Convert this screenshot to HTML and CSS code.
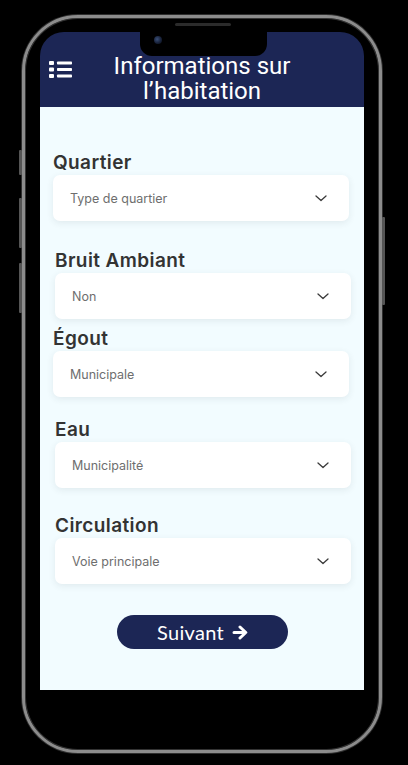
FILE: index.html
```html
<!DOCTYPE html>
<html lang="fr">
<head>
<meta charset="utf-8">
<title>Informations sur l'habitation</title>
<link rel="stylesheet" href="styles.css">
</head>
<body>
<div class="phone">
  <span class="speaker"></span>
  <span class="side-btn side-btn--mute"></span>
  <span class="side-btn side-btn--vol-up"></span>
  <span class="side-btn side-btn--vol-down"></span>
  <span class="side-btn side-btn--power"></span>
  <div class="screen">
    <div class="notch"><span class="camera"></span></div>
    <header class="header">
      <svg class="menu-icon" width="23" height="17" viewBox="0 0 23 17" aria-hidden="true">
        <rect x="0" y="0" width="5" height="4" rx="1" fill="#fff"/>
        <rect x="0" y="6.5" width="5" height="4" rx="1" fill="#fff"/>
        <rect x="0" y="13" width="5" height="4" rx="1" fill="#fff"/>
        <rect x="8" y="0.5" width="15" height="3" rx="0.8" fill="#fff"/>
        <rect x="8" y="7" width="15" height="3" rx="0.8" fill="#fff"/>
        <rect x="8" y="13.5" width="15" height="3" rx="0.8" fill="#fff"/>
      </svg>
      <h1 class="title"><span class="title-line">Informations sur</span><span class="title-line">l’habitation</span></h1>
      <span class="header-spacer"></span>
    </header>
    <main class="content">
      <div class="field field--quartier">
        <label class="field-label">Quartier</label>
        <div class="select"><span class="select-value">Type de quartier</span><svg class="chevron" width="12" height="7" viewBox="0 0 12 7"><path d="M1 1l5 4.5L11 1" fill="none" stroke="#3a3a3a" stroke-width="1.3" stroke-linecap="round" stroke-linejoin="round"/></svg></div>
      </div>
      <div class="field field--bruit field--shift">
        <label class="field-label">Bruit Ambiant</label>
        <div class="select"><span class="select-value">Non</span><svg class="chevron" width="12" height="7" viewBox="0 0 12 7"><path d="M1 1l5 4.5L11 1" fill="none" stroke="#3a3a3a" stroke-width="1.3" stroke-linecap="round" stroke-linejoin="round"/></svg></div>
      </div>
      <div class="field field--egout">
        <label class="field-label">Égout</label>
        <div class="select"><span class="select-value">Municipale</span><svg class="chevron" width="12" height="7" viewBox="0 0 12 7"><path d="M1 1l5 4.5L11 1" fill="none" stroke="#3a3a3a" stroke-width="1.3" stroke-linecap="round" stroke-linejoin="round"/></svg></div>
      </div>
      <div class="field field--eau field--shift">
        <label class="field-label">Eau</label>
        <div class="select"><span class="select-value">Municipalité</span><svg class="chevron" width="12" height="7" viewBox="0 0 12 7"><path d="M1 1l5 4.5L11 1" fill="none" stroke="#3a3a3a" stroke-width="1.3" stroke-linecap="round" stroke-linejoin="round"/></svg></div>
      </div>
      <div class="field field--circulation field--shift">
        <label class="field-label">Circulation</label>
        <div class="select"><span class="select-value">Voie principale</span><svg class="chevron" width="12" height="7" viewBox="0 0 12 7"><path d="M1 1l5 4.5L11 1" fill="none" stroke="#3a3a3a" stroke-width="1.3" stroke-linecap="round" stroke-linejoin="round"/></svg></div>
      </div>
      <button class="next-btn" type="button">Suivant
        <svg class="next-arrow" width="16" height="15" viewBox="0 0 16 15" aria-hidden="true"><path d="M2 7.5h11.5M8 2l5.8 5.5L8 13" fill="none" stroke="#fff" stroke-width="3" stroke-linecap="round" stroke-linejoin="round"/></svg>
      </button>
    </main>
  </div>
</div>
</body>
</html>
```
FILE: styles.css
```css
* { box-sizing: border-box; }

html, body {
  margin: 0;
  padding: 0;
  background: #000;
}

body {
  width: 408px;
  height: 765px;
  overflow: hidden;
}

.phone {
  position: relative;
  margin: 15px 0 0 22px;
  width: 360px;
  height: 738px;
  border: 3px solid #8c8c8c;
  border-radius: 56px;
  padding: 14px 15px;
  box-shadow: inset 0 0 0 1px #333, 0 0 0 1px #2e2e2e;
  background: #000;
}

.speaker {
  position: absolute;
  left: 150px;
  top: 5px;
  width: 56px;
  height: 3px;
  border-radius: 2px;
  background: #2b2b2b;
}

.side-btn {
  position: absolute;
  width: 3px;
  background: #555;
  border-radius: 1px;
}
.side-btn--mute { left: -6px; top: 132px; height: 25px; }
.side-btn--vol-up { left: -6px; top: 180px; height: 50px; }
.side-btn--vol-down { left: -6px; top: 245px; height: 50px; }
.side-btn--power { right: -6px; top: 199px; height: 88px; }

.screen {
  position: relative;
  height: 658px;
  border-radius: 24px 24px 0 0;
  overflow: hidden;
  display: flex;
  flex-direction: column;
}

.notch {
  position: absolute;
  left: 100px;
  top: 0;
  width: 127px;
  height: 24px;
  background: #000;
  border-radius: 0 0 12px 12px;
  z-index: 2;
}

.camera {
  position: absolute;
  left: 14px;
  top: 4px;
  width: 8px;
  height: 8px;
  border-radius: 50%;
  background: radial-gradient(circle at 40% 40%, #3a4f78 0%, #18223a 55%, #080c16 100%);
}

.header {
  height: 75px;
  flex: none;
  background: #1c2655;
  display: grid;
  grid-template-columns: 1fr auto 1fr;
  align-items: end;
  padding: 0 0 3px 0;
}

.menu-icon {
  align-self: center;
  margin: 2px 0 0 9px;
  display: block;
}

.title {
  margin: 0;
  font-family: Roboto, "Liberation Sans", sans-serif;
  font-weight: 400;
  font-size: 24px;
  line-height: 25px;
  color: #fff;
  text-align: center;
  display: flex;
  flex-direction: column;
  align-items: center;
}

.title-line {
  display: block;
  height: 25px;
}

.content {
  flex: 1;
  background: #f2fcff;
  padding: 45px 0 0 13px;
  display: flex;
  flex-direction: column;
}

.field {
  display: flex;
  flex-direction: column;
  width: 296px;
}
.field--shift { margin-left: 2px; }
.field--bruit { margin-top: 29px; }
.field--egout { margin-top: 9px; }
.field--eau { margin-top: 22px; }
.field--circulation { margin-top: 27px; }

.field-label {
  font-family: Inter, "Noto Sans", sans-serif;
  font-weight: 600;
  font-size: 19px;
  line-height: 22px;
  letter-spacing: 0.4px;
  color: #333;
  margin-bottom: 1px;
}

.select {
  height: 46px;
  background: #fff;
  border-radius: 7px;
  box-shadow: 0 2px 7px rgba(40, 60, 70, 0.09);
  display: flex;
  align-items: center;
  justify-content: space-between;
  padding: 0 22px 0 17px;
}

.select-value {
  font-family: Inter, "Noto Sans", sans-serif;
  font-size: 12.5px;
  font-weight: 400;
  color: #6e6e6e;
}

.chevron { display: block; }

.next-btn {
  margin: 31px 0 0 64px;
  width: 171px;
  height: 34px;
  border: none;
  border-radius: 17px;
  background: #1c2655;
  color: #fff;
  font-family: Lato, "Noto Sans", sans-serif;
  font-size: 20px;
  font-weight: 400;
  display: flex;
  align-items: center;
  justify-content: center;
  gap: 8px;
  padding: 0;
  letter-spacing: 0.3px;
}

.next-arrow { display: block; }
```
